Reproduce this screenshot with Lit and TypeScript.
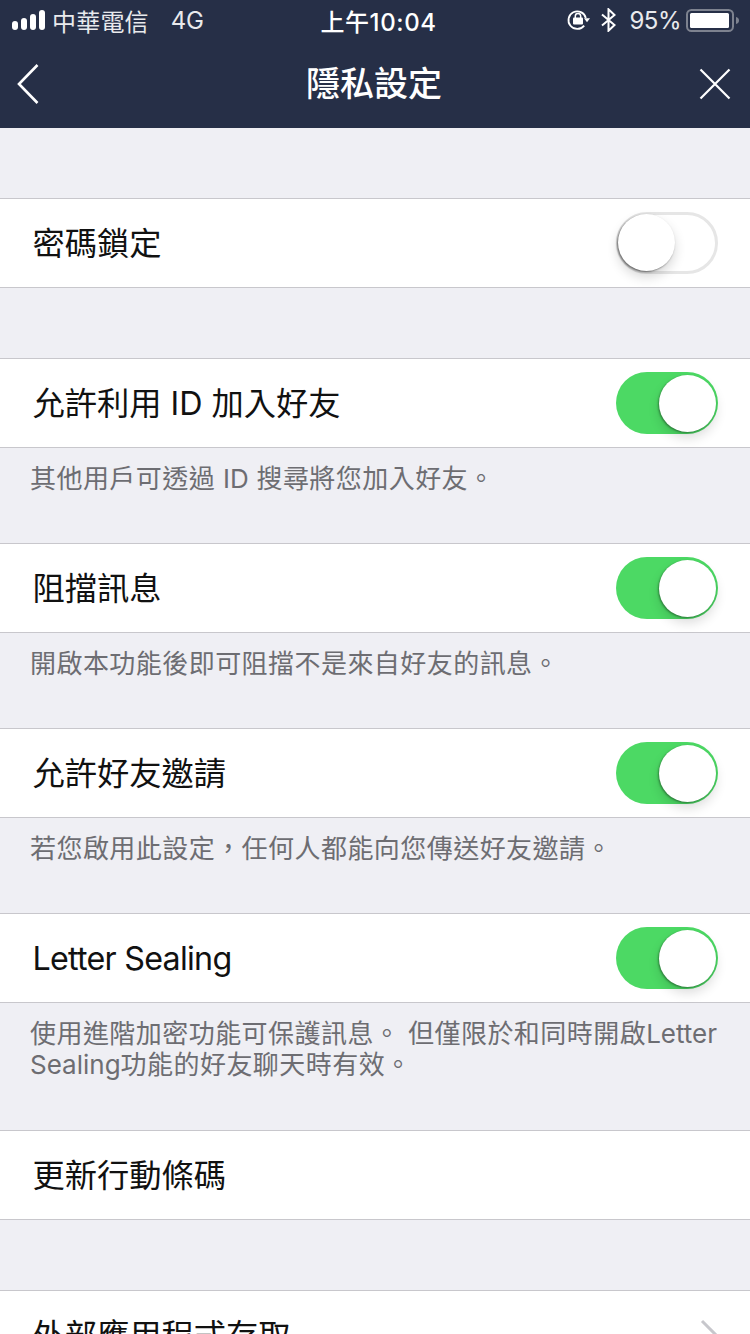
import { LitElement, html, css, svg, unsafeCSS } from "lit";
import { customElement, property } from "lit/decorators.js";

const FONT = unsafeCSS(`Inter, "Noto Sans CJK TC", sans-serif`);

@customElement("ios-switch")
export class IosSwitch extends LitElement {
	static override styles = css`
		:host {
			display: block;
			width: 102px;
			height: 62px;
		}
		.track {
			position: relative;
			box-sizing: border-box;
			width: 102px;
			height: 62px;
			border-radius: 31px;
		}
		.track.on {
			background: #4cd964;
		}
		.track.off {
			border: 3px solid #e6e6e6;
			background: #fff;
		}
		.knob {
			position: absolute;
			width: 57px;
			height: 57px;
			border-radius: 50%;
			background: #fff;
		}
		.on .knob {
			top: 3px;
			right: 2px;
			box-shadow: -1px 1px 2px rgba(0, 0, 0, 0.35), 0 6px 12px rgba(0, 0, 0, 0.14);
		}
		.off .knob {
			top: -1px;
			left: -1px;
			box-shadow: -1px 1px 2px rgba(0, 0, 0, 0.5), 0 6px 12px rgba(0, 0, 0, 0.16);
		}
	`;

	@property({ type: Boolean })
	on = false;

	override render() {
		return html`<div class="track ${this.on ? "on" : "off"}"><div class="knob"></div></div>`;
	}
}

@customElement("app-root")
export class AppRoot extends LitElement {
	static override styles = css`
		:host {
			display: block;
			width: 750px;
			height: 1334px;
			overflow: hidden;
			background: #efeff4;
			font-family: ${FONT};
		}
		.topbar {
			height: 128px;
			background: #262f47;
			color: #fff;
		}
		.status {
			box-sizing: border-box;
			height: 40px;
			padding: 0 11px 0 12px;
			display: grid;
			grid-template-columns: 1fr auto 1fr;
			align-items: center;
			font-size: 24px;
		}
		.status-left,
		.status-right {
			display: flex;
			align-items: center;
		}
		.status-right {
			justify-content: flex-end;
		}
		.carrier {
			margin-left: 7px;
			letter-spacing: 0.2px;
			color: #e9eaed;
		}
		.network {
			margin-left: 22px;
			letter-spacing: -0.4px;
			color: #e9eaed;
		}
		.clock {
			margin-left: 6px;
			font-weight: 500;
			letter-spacing: 0.6px;
		}
		.percent {
			margin: 0 5px 0 13px;
			letter-spacing: -0.5px;
			color: #e9eaed;
		}
		.bt {
			margin-left: 11px;
		}
		.nav {
			height: 88px;
			padding: 0 19px 0 17px;
			box-sizing: border-box;
			display: grid;
			grid-template-columns: 1fr auto 1fr;
			align-items: center;
		}
		.nav .close {
			justify-self: end;
		}
		.title {
			margin-bottom: 6px;
			font-size: 34px;
			font-weight: 500;
		}
		.list {
			padding-top: 70px;
		}
		.row {
			box-sizing: border-box;
			height: 90px;
			padding: 0 32px 0 32.5px;
			display: flex;
			align-items: center;
			justify-content: space-between;
			background: #fff;
			border-top: 1px solid #c8c7cc;
			border-bottom: 1px solid #c8c7cc;
			font-size: 32.25px;
			color: #111;
		}
		.row span {
			position: relative;
			top: -2px;
		}
		.row span.latin {
			top: 0;
			letter-spacing: -0.75px;
		}
		.gap {
			height: 70px;
		}
		.note {
			box-sizing: border-box;
			height: 95px;
			padding: 15px 30px 0;
			font-size: 26px;
			line-height: 31px;
			letter-spacing: 0.45px;
			color: #6d6d72;
		}
		.note.tall {
			height: 127px;
		}
		.note .word {
			letter-spacing: 0;
		}
	`;

	private renderRow(label: string, on?: boolean, latin = false) {
		return html`<div class="row">
			<span class=${latin ? "latin" : ""}>${label}</span>
			${on === undefined ? "" : html`<ios-switch ?on=${on}></ios-switch>`}
		</div>`;
	}

	private signalBars() {
		return svg`<svg width="33" height="20" viewBox="0 0 33 20" fill="#fff">
			<rect x="0" y="11" width="6" height="9" rx="3" />
			<rect x="9" y="8" width="6" height="12" rx="3" />
			<rect x="18" y="4" width="6" height="16" rx="3" />
			<rect x="27" y="0" width="6" height="20" rx="3" />
		</svg>`;
	}

	override render() {
		return html`
			<header class="topbar">
				<div class="status">
					<div class="status-left">
						${this.signalBars()}
						<span class="carrier">中華電信</span>
						<span class="network">4G</span>
					</div>
					<div class="clock">上午10:04</div>
					<div class="status-right">
						<svg width="24" height="24" viewBox="0 0 24 24" fill="none">
							<path d="M18.2 17.600A8.800 8.800 0 1 1 19.800 10" stroke="#fff" stroke-width="1.800" />
							<path d="M18 10.200h6l-3 4z" fill="#fff" />
							<rect x="7" y="9.500" width="10" height="7" rx="1" fill="#fff" />
							<path d="M9.300 10V8.300a2.700 2.700 0 0 1 5.400 0V10" stroke="#fff" stroke-width="1.500" />
						</svg>
						<svg class="bt" width="15" height="24" viewBox="0 0 15 24" fill="none">
							<path d="M1 6.500l12.500 10.500-6 5.700V1.300l6 5.700L1 17.500" stroke="#fff" stroke-width="2" />
						</svg>
						<span class="percent">95%</span>
						<svg width="53" height="24" viewBox="0 0 53 24">
							<rect x="1" y="2" width="46" height="21" rx="4.500" fill="none" stroke="#7d828f" stroke-width="2" />
							<rect x="4" y="5" width="39" height="15" rx="1.500" fill="#fff" />
							<path d="M50 9c2 .4 3 1.700 3 3.500s-1 3.100-3 3.500z" fill="#7d828f" />
						</svg>
					</div>
				</div>
				<div class="nav">
					<svg width="22" height="40" viewBox="0 0 22 40" fill="none">
						<path d="M20.500 1L2 20l18.500 19" stroke="#fff" stroke-width="2.600" />
					</svg>
					<div class="title">隱私設定</div>
					<svg class="close" width="32" height="32" viewBox="0 0 32 32" fill="none">
						<path d="M1.500 1.500l29 29M30.500 1.500l-29 29" stroke="#fff" stroke-width="2.200" />
					</svg>
				</div>
			</header>
			<main class="list">
				${this.renderRow("密碼鎖定", false)}
				<div class="gap"></div>
				${this.renderRow("允許利用 ID 加入好友", true)}
				<div class="note">其他用戶可透過 <span class="word">ID</span> 搜尋將您加入好友。</div>
				${this.renderRow("阻擋訊息", true)}
				<div class="note">開啟本功能後即可阻擋不是來自好友的訊息。</div>
				${this.renderRow("允許好友邀請", true)}
				<div class="note">若您啟用此設定，任何人都能向您傳送好友邀請。</div>
				${this.renderRow("Letter Sealing", true, true)}
				<div class="note tall">使用進階加密功能可保護訊息。 但僅限於和同時開啟<span class="word">Letter Sealing</span>功能的好友聊天時有效。</div>
				${this.renderRow("更新行動條碼")}
				<div class="gap"></div>
				<div class="row">
					<span>外部應用程式存取</span>
					<svg width="18" height="32" viewBox="0 0 18 32" fill="none">
						<path d="M2 2l14 14L2 30" stroke="#c7c7cc" stroke-width="3" />
					</svg>
				</div>
			</main>
		`;
	}
}
